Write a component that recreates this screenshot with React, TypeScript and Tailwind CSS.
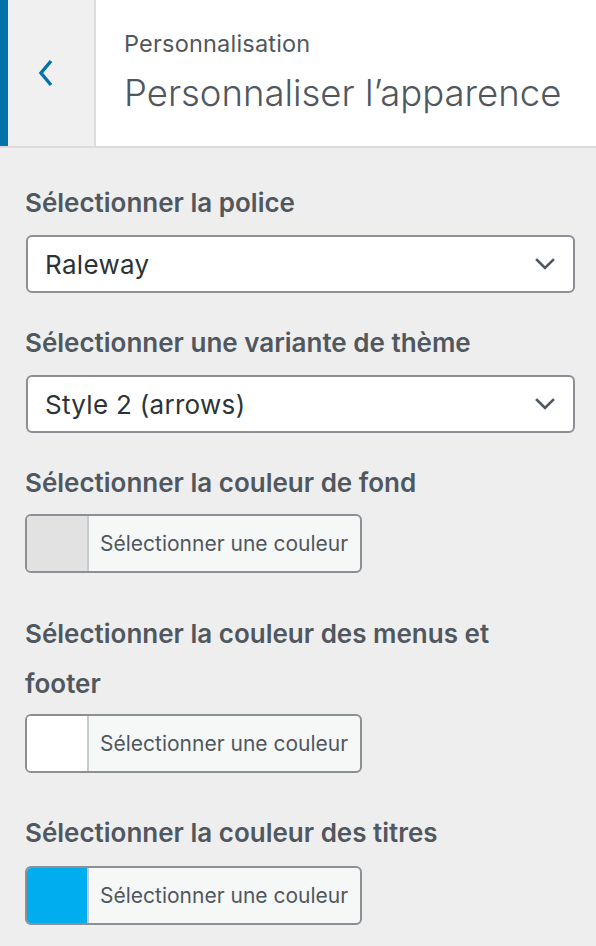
import React from "react";

const font = { fontFamily: "Inter, 'Noto Sans', sans-serif" };

function Chevron() {
  return (
    <svg width="20" height="12" viewBox="0 0 20 12" fill="none">
      <path d="M2 2 L10 10 L18 2" stroke="#50575e" strokeWidth="2.6" strokeLinecap="square" />
    </svg>
  );
}

function Select({ value }: { value: string }) {
  return (
    <div className="mx-[1px] flex h-[58px] items-center justify-between rounded-[6px] border-2 border-[#8c8f94] bg-white pl-[17px] pr-[18px]">
      <span className="text-[26px] tracking-[0.3px] text-[#2c3338]">{value}</span>
      <Chevron />
    </div>
  );
}

function ColorButton({ swatch }: { swatch: string }) {
  return (
    <div className="flex h-[59px] w-[337px] overflow-hidden rounded-[6px] border-2 border-[#8c8f94] bg-[#f6f7f7]">
      <div className={`w-[62px] border-r-2 border-[#c9cacc] ${swatch}`} />
      <div className="flex flex-1 items-center pl-[11px] text-[21px] text-[#50575e]">Sélectionner une couleur</div>
    </div>
  );
}

function Label({ children, className = "" }: { children: React.ReactNode; className?: string }) {
  return (
    <div className={`text-[26px] font-semibold leading-[50px] text-[#50575e] ${className}`}>{children}</div>
  );
}

export default function App() {
  return (
    <div style={font} className="min-h-[946px] w-[596px] bg-[#eeeeee]">
      <div className="flex h-[148px] border-b-2 border-[#dcdcde] bg-white">
        <div className="flex w-[96px] items-center justify-center border-l-8 border-r-2 border-l-[#0073aa] border-r-[#dcdcde] bg-[#f0f0f1]">
          <svg width="18" height="28" viewBox="0 0 18 28" fill="none" className="mr-[10px]">
            <path d="M14 2 L4 14 L14 26" stroke="#0073aa" strokeWidth="3.4" />
          </svg>
        </div>
        <div className="flex flex-col pl-[28px] pt-[29px]">
          <div className="text-[23.5px] leading-[30px] tracking-[0.2px] text-[#50575e]">Personnalisation</div>
          <div className="mt-[11px] text-[36.5px] font-light leading-[46px] text-[#50575e]">Personnaliser l’apparence</div>
        </div>
      </div>
      <div className="pl-[25px] pr-[20px] pt-[30px]">
        <Label>Sélectionner la police</Label>
        <div className="mt-[7px]">
          <Select value="Raleway" />
        </div>
        <Label className="mt-[25px]">Sélectionner une variante de thème</Label>
        <div className="mt-[7px]">
          <Select value="Style 2 (arrows)" />
        </div>
        <Label className="mt-[25px]">Sélectionner la couleur de fond</Label>
        <div className="mt-[6px]">
          <ColorButton swatch="bg-[#e2e2e2]" />
        </div>
        <Label className="mt-[36px] max-w-[500px]">Sélectionner la couleur des menus et footer</Label>
        <div className="mt-[5px]">
          <ColorButton swatch="bg-white" />
        </div>
        <Label className="mt-[35px]">Sélectionner la couleur des titres</Label>
        <div className="mt-[8px]">
          <ColorButton swatch="bg-[#00adef]" />
        </div>
      </div>
    </div>
  );
}
